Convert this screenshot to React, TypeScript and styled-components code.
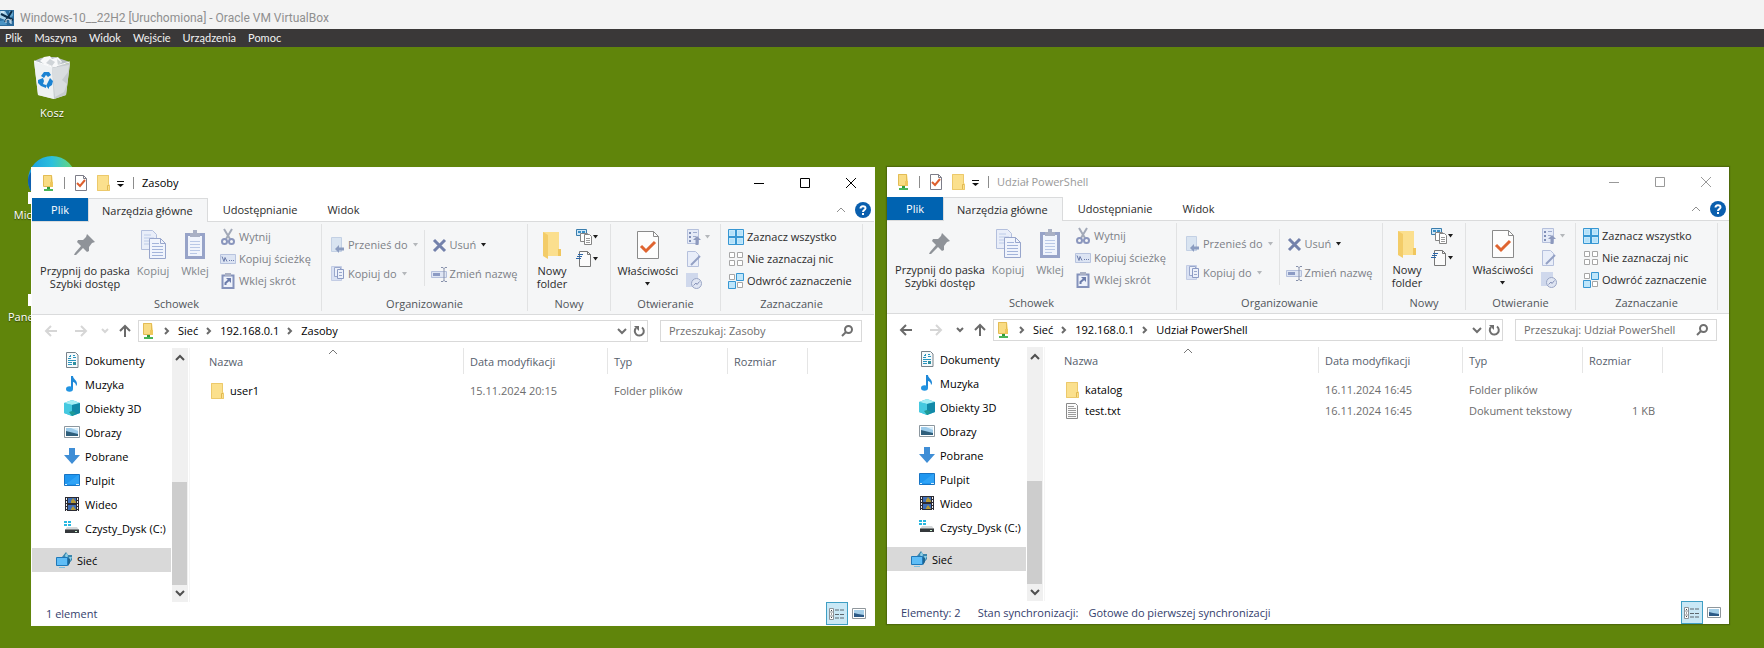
import React from "react";
import styled, { createGlobalStyle, css } from "styled-components";

const GlobalStyle = createGlobalStyle`
  *, *::before, *::after { box-sizing: border-box; }
  html, body { margin: 0; background: #60850b; }
  body { font: 11px/13px "Open Sans", "Noto Sans", sans-serif; color: #1b1b1b; }
  button, input { font: inherit; color: inherit; }
  svg { display: block; flex: none; overflow: visible; }
  ul { list-style: none; margin: 0; padding: 0; }
`;

const plainButton = css`
  border: 0;
  padding: 0;
  background: none;
  cursor: default;
`;

/* ---------- Host window ---------- */

const Host = styled.div`
  min-height: 100vh;
  display: flex;
  flex-direction: column;
`;

const HostTitle = styled.header`
  height: 29px;
  padding-top: 7px;
  display: flex;
  align-items: center;
  gap: 6px;
  background: #f3f3f3;
  h1 {
    margin: 0;
    font: 400 12px/16px Roboto, sans-serif;
    color: #8f8f8f;
  }
`;

const HostMenu = styled.nav`
  height: 18px;
  padding-left: 5px;
  display: flex;
  align-items: center;
  gap: 12px;
  background: #3a3838;
`;

const HostMenuButton = styled.button`
  ${plainButton}
  font: 11px/16px Lato, sans-serif;
  color: #f2f2f2;
`;

const Desktop = styled.main`
  position: relative;
  flex: 1;
  display: flex;
  align-items: flex-start;
  gap: 12px;
  padding: 120px 35px 22px 31px;
  overflow: hidden;
`;

const Shortcuts = styled.ul`
  position: absolute;
  top: 7px;
  left: 2px;
  width: 100px;
  display: flex;
  flex-direction: column;
  gap: 36px;
`;

const Shortcut = styled.li`
  display: flex;
  flex-direction: column;
  align-items: center;
  gap: 3px;
  line-height: 15px;
  color: #fff;
  white-space: nowrap;
  text-shadow: 0 1px 1px rgba(0, 0, 0, 0.5);
`;

/* ---------- Explorer window ---------- */

const Win = styled.section<{ $active: boolean }>`
  position: relative;
  flex: 1 1 0;
  min-width: 0;
  overflow: hidden;
  background: #fff;
  ${(p) => p.$active && "border: 1px solid #fdfdfd;"}
  ${(p) => !p.$active && "box-shadow: 0 0 1px 1px rgba(60, 80, 10, 0.5);"}
`;

const TitleBar = styled.header<{ $active: boolean }>`
  height: 30px;
  padding-left: 8px;
  display: flex;
  align-items: center;
  color: ${(p) => (p.$active ? "#000" : "#999")};
  h2 {
    flex: 1;
    margin: 0;
    padding-bottom: 2px;
    font: inherit;
  }
`;

const QuickBar = styled.div`
  display: flex;
  align-items: center;
  gap: 6px;
`;

const QuickButton = styled.button`
  ${plainButton}
`;

const Separator = styled.i`
  width: 1px;
  height: 12px;
  margin: 0 8px;
  background: #8c8c8c;
`;

const CaptionButton = styled.button`
  ${plainButton}
  width: 46px;
  height: 28px;
  display: grid;
  place-items: center;
`;

const Tabs = styled.nav`
  height: 23px;
  display: flex;
  align-items: stretch;
`;

const Tab = styled.button<{ $kind?: "file" | "selected" }>`
  ${plainButton}
  padding: 0 15px 1px;
  color: #2b2b2b;
  ${(p) =>
    p.$kind === "file" &&
    css`
      width: 56px;
      padding: 0 0 1px;
      background: #0063b1;
      color: #fff;
    `}
  ${(p) =>
    p.$kind === "selected" &&
    css`
      position: relative;
      height: 24px;
      padding: 0 14px 1px 13px;
      border: 1px solid #dadbdc;
      border-bottom: 0;
      background: #f5f6f7;
      z-index: 1;
    `}
`;

const TabTools = styled.div`
  margin-left: auto;
  padding-right: 3px;
  display: flex;
  align-items: center;
  gap: 10px;
`;

const Ribbon = styled.div`
  display: flex;
  padding: 2px 0 3px;
  border: solid #dadbdc;
  border-width: 1px 0;
  background: #f5f6f7;
`;

const Group = styled.section<{ $width: number }>`
  flex: none;
  width: ${(p) => p.$width}px;
  height: 87px;
  display: flex;
  flex-direction: column;
  border-right: 1px solid #e1e2e3;
  h3 {
    margin: 0;
    padding-bottom: 1px;
    font: inherit;
    text-align: center;
    color: #50555a;
  }
`;

const GroupBody = styled.div<{ $indent: number }>`
  flex: 1;
  display: flex;
  align-items: flex-start;
  gap: 4px;
  padding-left: ${(p) => p.$indent}px;
`;

const BigButton = styled.button<{ $width: number }>`
  ${plainButton}
  width: ${(p) => p.$width}px;
  padding-top: 6px;
  display: flex;
  flex-direction: column;
  align-items: center;
  gap: 5px;
  white-space: nowrap;
  color: #2b2b2b;
  &:disabled {
    color: #82868c;
  }
`;

const BigIcon = styled.span`
  height: 29px;
  display: grid;
  place-items: center;
`;

const BigLabel = styled.span`
  display: flex;
  flex-direction: column;
  align-items: center;
  gap: 5px;
`;

const SmallColumn = styled.div<{ $spread?: boolean }>`
  display: flex;
  flex-direction: column;
  padding-top: ${(p) => (p.$spread ? 10 : 2)}px;
  gap: ${(p) => (p.$spread ? 7 : 0)}px;
`;

const SmallButton = styled.button<{ $tight?: boolean }>`
  ${plainButton}
  height: 22px;
  padding-left: 2px;
  display: flex;
  align-items: center;
  gap: ${(p) => (p.$tight ? 1 : 3)}px;
  white-space: nowrap;
  color: #2b2b2b;
  &:disabled {
    color: #7d8187;
  }
`;

const SmallLabel = styled.span`
  padding-bottom: 2px;
`;

const Divider = styled.i`
  width: 1px;
  height: 56px;
  margin: 6px 0 0 1px;
  background: #e1e2e3;
`;

const AddressRow = styled.div`
  display: flex;
  align-items: center;
  padding: 5px 12px 6px 4px;
`;

const NavButton = styled.button<{ $width: number }>`
  ${plainButton}
  width: ${(p) => p.$width}px;
  height: 22px;
  display: grid;
  place-items: center;
  color: #6a6a6a;
  &:disabled {
    color: #d6d6d6;
  }
`;

const AddressBox = styled.div`
  flex: 1;
  height: 22px;
  margin: 0 12px 0 2px;
  padding-left: 1px;
  display: flex;
  align-items: center;
  border: 1px solid #d9d9d9;
  color: #000;
`;

const Crumb = styled.button`
  ${plainButton}
  padding-bottom: 1px;
  white-space: nowrap;
`;

const CrumbArrow = styled.span`
  width: 22px;
  display: grid;
  place-items: center;
`;

const AddressTools = styled.div`
  margin-left: auto;
  display: flex;
`;

const AddressTool = styled.button<{ $ruled?: boolean }>`
  ${plainButton}
  width: 17px;
  height: 20px;
  display: grid;
  place-items: center;
  ${(p) => p.$ruled && "border-left: 1px solid #d9d9d9;"}
`;

const SearchBox = styled.label`
  width: 202px;
  height: 22px;
  padding: 0 8px;
  display: flex;
  align-items: center;
  border: 1px solid #d9d9d9;
  input {
    flex: 1;
    min-width: 0;
    padding: 0 0 1px;
    border: 0;
    outline: 0;
    background: none;
  }
  input::placeholder {
    color: #6d6d6d;
    opacity: 1;
  }
`;

const Body = styled.div`
  display: flex;
  align-items: stretch;
`;

const Tree = styled.ul`
  && {
    width: 140px;
    flex: none;
    padding: 0 1px 30px 0;
  }
`;

const TreeLink = styled.a<{ $root?: boolean }>`
  height: 24px;
  margin-top: ${(p) => (p.$root ? 8 : 0)}px;
  padding-left: ${(p) => (p.$root ? 24 : 32)}px;
  display: flex;
  align-items: center;
  gap: 5px;
  overflow: hidden;
  white-space: nowrap;
  text-decoration: none;
  color: #000;
  background: ${(p) => (p.$root ? "#d9d9d9" : "none")};
`;

const ScrollBar = styled.div`
  width: 16px;
  flex: none;
  padding: 7px 0 6px;
  display: flex;
  flex-direction: column;
  align-items: center;
  justify-content: space-between;
  background: #f0f0f0;
`;

const ScrollThumb = styled.i`
  width: 16px;
  height: 103px;
  margin: auto 0 5px;
  border-right: 1px solid #f0f0f0;
  background: #cdcdcd;
`;

const FilePane = styled.div`
  flex: 1;
  min-width: 0;
  margin-left: 1px;
  padding-left: 13px;
  border-left: 1px solid #f5f5f5;
`;

const FileTable = styled.table`
  width: 100%;
  table-layout: fixed;
  border-collapse: collapse;
  th, td {
    padding: 0;
    font-weight: 400;
    text-align: left;
    white-space: nowrap;
    color: #6d6d6d;
  }
  td { height: 21px; padding: 0 8px 0 6px; }
  col:nth-child(1) { width: 261px; }
  col:nth-child(2) { width: 144px; }
  col:nth-child(3) { width: 120px; }
  col:nth-child(4) { width: 80px; }
`;

const HeadCell = styled.div`
  position: relative;
  height: 26px;
  margin-bottom: 6px;
  padding-left: 6px;
  display: flex;
  align-items: center;
  border-right: 1px solid #e5e5e5;
  color: #56606c;
`;

const SortMark = styled.span`
  position: absolute;
  top: 1px;
  left: 50%;
  margin-left: -4px;
`;

const FileName = styled.span`
  display: flex;
  align-items: center;
  gap: 5px;
  color: #000;
`;

const SizeCell = styled.td`
  && { text-align: right; }
`;

const StatusBar = styled.footer`
  height: 23px;
  padding: 0 4px 0 14px;
  display: flex;
  align-items: center;
  gap: 17px;
  color: #34406c;
`;

const StatusPair = styled.span`
  display: flex;
  gap: 10px;
`;

const ViewButtons = styled.div`
  margin-left: auto;
  display: flex;
`;

const ViewButton = styled.button<{ $on?: boolean }>`
  ${plainButton}
  width: 22px;
  height: 23px;
  display: grid;
  place-items: center;
  ${(p) => p.$on && "border: 1px solid #3f9fc4; background: #c9e8f6;"}
`;

/* ---------- Icons ---------- */

type BoxProps = { w?: number; h?: number; children: React.ReactNode };
const Svg = ({ w = 16, h = 16, children }: BoxProps) => (
  <svg width={w} height={h} viewBox={`0 0 ${w} ${h}`} fill="none" aria-hidden="true">
    {children}
  </svg>
);

const HostIcon = () => (
  <Svg w={14}>
    <path d="M0 0H14V16H0Z" fill="#2b6b9c" />
    <path d="M0 1H5L8 6 5 10 0 8Z" fill="#a9d3ea" />
    <path d="M9 1H13V6L10 8Z" fill="#5fa3cd" />
    <path d="M0 11 5 10 7 15H0Z" fill="#4b94c4" />
    <path d="M12 1 5 12M1 4 13 10" stroke="#0c2c48" strokeWidth="2" />
    <path d="M6 13V10L8 9 10 10V13M11 9V14" stroke="#e6f3fb" />
    <path d="M1 2H4" stroke="#f4fafd" />
  </Svg>
);

const BinIcon = () => (
  <Svg w={48} h={48}>
    <path d="M6 7 10 41 26 45 38 41 42 9 24 13Z" fill="#dfe3e6" />
    <path d="M6 7 24 12 26 45 10 41Z" fill="#eef1f3" />
    <path d="M24 12 42 9 38 41 26 45Z" fill="#c6cbcf" />
    <path d="M24 14 41 11 40 18 34 26 39 30 36 38 27 43Z" fill="#d9dde0" />
    <path d="M6 7 13 4 19 3 27 3 42 8 24 13Z" fill="#b9c0c5" />
    <path d="M12 7 16 3 22 2 24 5 30 3 34 8 28 13 17 11Z" fill="#f8f9fa" />
    <path d="M18 9 22 5 27 8 24 12ZM29 5 33 8 30 12Z" fill="#cfd4d8" />
    <path d="M6 7 24 13 42 8" stroke="#fafbfc" />
    <g fill="#1b82d2">
      <path d="M13 22 16 18 21 18 23 21 20 23 18 21 16 24Z" />
      <path d="M10 26 15 24 16 27 15 30 18 31 18 34 13 32 10 29Z" />
      <path d="M19 30 22 24 25 27 24 31 21 33 21 35 18 32Z" />
    </g>
  </Svg>
);

const EdgeIcon = () => (
  <Svg w={48} h={48}>
    <defs>
      <linearGradient id="edge" x1="0" y1="0" x2="1" y2="0">
        <stop offset="0" stopColor="#1b9de0" />
        <stop offset="0.5" stopColor="#2cc0dc" />
        <stop offset="1" stopColor="#6fdc6c" />
      </linearGradient>
    </defs>
    <circle cx="24" cy="24" r="24" fill="url(#edge)" />
    <path d="M0 24C1 15 8 10 14 12 4 18 5 34 12 44 5 40 0 33 0 24Z" fill="#0f5fae" />
    <path d="M0 36H12V48H0Z" fill="#fff" />
  </Svg>
);

const PanelIcon = () => (
  <Svg w={48} h={48}>
    <path d="M4 8H44V40H4Z" fill="#3a9bdc" />
    <path d="M0 36H12V48H0Z" fill="#fff" />
  </Svg>
);

const NetFolderIcon = () => (
  <Svg>
    <path d="M3 0H12L13 7V11H3Z" fill="#f9dc84" />
    <path d="M3.500.500H11.500V7L12.500 8V11.500H3.500Z" stroke="#e3bc55" />
    <path d="M10 7H13V12H10Z" fill="#efc75c" />
    <path d="M7 12H10V15H7Z" fill="#2f9c3c" />
    <path d="M4 14H13V16H4Z" fill="#4bb457" />
  </Svg>
);

const FolderIcon = () => (
  <Svg>
    <path d="M2 0H14V9L15 10V16H2Z" fill="#fbe08d" />
    <path d="M2.500.500H13.500V9.500L14.500 10.500V15.500H2.500Z" stroke="#ecc96b" />
    <path d="M12.500 15V10.500H14" stroke="#e0b850" />
  </Svg>
);

const CheckDocIcon = () => (
  <Svg>
    <path d="M2.500.500H10.500L13.500 3.500V15.500H2.500Z" fill="#fff" stroke="#7d7d88" />
    <path d="M10.500.500V3.500H13.500" stroke="#7d7d88" />
    <path d="M4 8 7 11 12 5" stroke="#dd5f2d" strokeWidth="2" />
  </Svg>
);

const QuickMenuIcon = () => (
  <Svg w={8} h={16}>
    <path d="M0 6.500H7" stroke="#111" />
    <path d="M0 9H7L3.500 12Z" fill="#111" />
  </Svg>
);

const Arrow = ({ off }: { off?: boolean }) => (
  <Svg w={6} h={4}>
    <path d="M0 0H5L2.500 3.500Z" fill={off ? "#b4b7bb" : "#1d1d1d"} />
  </Svg>
);
const SpacedArrow = styled.span`
  margin-left: 2px;
`;

const PinIcon = () => (
  <Svg w={22} h={22}>
    <path
      d="M13 0 21 8 18 9 15 13 15 17 13 18 9 14 2 21 0 21 1 19 7 12 3 8 4 6 9 6 12 3Z"
      fill="#8f9399"
    />
  </Svg>
);

const CopyIcon = () => (
  <Svg w={25} h={29}>
    <path d="M.500.500H11.500L15.500 4.500V19.500H.500Z" fill="#e9eef9" stroke="#b3bfdd" />
    <path d="M3 5H10M3 8H13M3 11H13M3 14H13" stroke="#bccbe8" />
    <path d="M8.500 8.500H19.500L24.500 13.500V28.500H8.500Z" fill="#f0f4fc" stroke="#98a6cc" />
    <path d="M19.500 8.500V13.500H24.500" stroke="#98a6cc" />
    <path d="M11 13.500H18M11 16.500H22M11 19.500H22M11 22.500H22M11 25.500H22" stroke="#a3b4da" />
  </Svg>
);

const PasteIcon = () => (
  <Svg w={20} h={29}>
    <path d="M0 3H20V29H0Z" fill="#97a3c8" />
    <path d="M3 6H17V26H3Z" fill="#f0f4fc" />
    <path d="M5 11.500H15M5 14.500H15M5 17.500H15M5 20.500H15M5 23.500H12" stroke="#b9c8e6" />
    <path d="M5 3H8V0H12V3H15V7H5Z" fill="#a9b0c4" />
  </Svg>
);

const CutIcon = () => (
  <Svg>
    <path d="M4 0 10 10M12 0 6 10" stroke="#a2a9b8" strokeWidth="2" />
    <circle cx="4.500" cy="12.500" r="2.500" stroke="#8a96bd" strokeWidth="2" />
    <circle cx="11.500" cy="12.500" r="2.500" stroke="#8a96bd" strokeWidth="2" />
  </Svg>
);

const CopyPathIcon = () => (
  <Svg>
    <path d="M.500 3.500H15.500V12.500H.500Z" fill="#dce4f3" stroke="#b7c3de" />
    <path d="M2 5.500 4 10.500 5 6.500 7 10.500" stroke="#6b7cab" />
    <path d="M9 9.500H10M11 9.500H12M13 9.500H14" stroke="#6b7cab" />
  </Svg>
);

const PasteLinkIcon = () => (
  <Svg>
    <path d="M2.500 2.500H13.500V15H2.500Z" fill="#eef2fb" stroke="#8492bb" strokeWidth="2" />
    <path d="M5 0H11V3H5Z" fill="#a9b0c4" />
    <path d="M5.500 12V10L9 7" stroke="#6b7cab" strokeWidth="2" />
    <path d="M6 5H11V10Z" fill="#6b7cab" />
  </Svg>
);

const MoveIcon = () => (
  <Svg>
    <path d="M2.500.500H12.500V14.500H2.500Z" fill="#d9e4f1" stroke="#c3d0e4" />
    <path d="M6 12 10 8V10.500H15V13.500H10V16Z" fill="#8b9cc0" />
  </Svg>
);

const CopyToIcon = () => (
  <Svg>
    <path d="M2.500.500H12.500V14.500H2.500Z" fill="#d9e1f3" stroke="#c3cce4" />
    <path d="M5.500 1.500H11.500V10.500H5.500Z" fill="#edf1fa" stroke="#9aa8cc" />
    <path d="M8.500 3.500H14.500V12.500H8.500Z" fill="#edf1fa" stroke="#8c9bc4" />
    <path d="M10 6.500H13M10 9.500H13" stroke="#9aa8cc" />
  </Svg>
);

const DeleteIcon = () => (
  <Svg>
    <path d="M3 3 14 14M14 3 3 14" stroke="#7381ab" strokeWidth="3" />
  </Svg>
);

const RenameIcon = () => (
  <Svg>
    <path d="M.500 5.500H15.500V11.500H.500Z" fill="#dfe6f4" stroke="#b5c0dc" />
    <path d="M2 7H9V10H2Z" fill="#8c9bc4" />
    <path d="M10 1.500H12L13 2.500 14 1.500H16M10 15.500H12L13 14.500 14 15.500H16M13 2V15" stroke="#8791ab" />
  </Svg>
);

const NewFolderIcon = () => (
  <Svg w={20} h={28}>
    <path d="M1 1H17V18L19 19V25H1Z" fill="#fbdf8e" />
    <path d="M1 1 6 4V28L1 25Z" fill="#f3cc68" />
    <path d="M16 18H19V25H16Z" fill="#f0c65d" />
  </Svg>
);

const NewItemIcon = () => (
  <Svg>
    <path d="M.500.500H10.500V6.500H.500Z" fill="#cfe7f7" stroke="#3a7dad" />
    <path d="M2 2H5V4H2ZM6 2H9V4H6Z" fill="#3a8fc6" />
    <path d="M4.500 4.500H11.500V12.500H4.500Z" fill="#fff" stroke="#858585" />
    <path d="M8.500 5.500H13.500L15.500 7.500V15.500H8.500Z" fill="#fff" stroke="#858585" />
    <path d="M10 9.500H14M10 11.500H14M10 13.500H14" stroke="#9a9a9a" />
  </Svg>
);

const EasyAccessIcon = () => (
  <Svg>
    <path d="M3.500.500H11.500L14.500 3.500V15.500H3.500Z" fill="#fbfbfb" stroke="#777" />
    <path d="M11.500.500V3.500H14.500" stroke="#777" />
    <path d="M2 3.500H7M1 5.500H6M0 7.500H5" stroke="#2c66a8" />
  </Svg>
);

const PropertiesIcon = () => (
  <Svg w={22} h={28}>
    <path d="M.500.500H16.500L21.500 5.500V27.500H.500Z" fill="#fdfdfd" stroke="#8a8a8a" />
    <path d="M16.500.500V5.500H21.500" stroke="#8a8a8a" />
    <path d="M4 15 9 20 18 11" stroke="#df6430" strokeWidth="3" />
  </Svg>
);

const OpenIcon = () => (
  <Svg>
    <path d="M1.500.500H12.500V14.500H1.500Z" fill="#e4eaf7" stroke="#b5c0dc" />
    <path d="M3 3H5V5H3ZM3 7H5V9H3ZM3 11H5V13H3Z" fill="#7e8db5" />
    <path d="M7 3.500H11M7 7.500H10" stroke="#9eabcd" />
    <path d="M7 11 11 7 15 11H12.500V16H9.500V11Z" fill="#8d99bd" />
  </Svg>
);

const EditIcon = () => (
  <Svg>
    <path d="M1.500.500H9.500L12.500 3.500V15.500H1.500Z" fill="#e9eef9" stroke="#b5c0dc" />
    <path d="M5 14 14 5" stroke="#93a0c4" strokeWidth="2" />
  </Svg>
);

const HistoryIcon = () => (
  <Svg>
    <path d="M0 0H12V14H0Z" fill="#cfd8ec" />
    <circle cx="10.500" cy="10.500" r="5" fill="#dfe5f2" stroke="#9aa6c6" />
    <path d="M7.500 12.500 10 10 11 11.500 13.500 8.500" stroke="#8793b8" />
  </Svg>
);

const SelectAllIcon = () => (
  <Svg>
    <path d="M.500.500H15.500V15.500H.500Z" fill="#c5e8fb" stroke="#3797d3" />
    <path d="M8 0V16M0 8H16" stroke="#3797d3" strokeWidth="2" />
    <path d="M2 2H6V6H2ZM10 2H14V6H10ZM2 10H6V14H2ZM10 10H14V14H10Z" fill="#b4e1f9" />
  </Svg>
);

const SelectNoneIcon = () => (
  <Svg>
    <path
      d="M1.500 1.500H6.500V6.500H1.500ZM9.500 1.500H14.500V6.500H9.500ZM1.500 9.500H6.500V14.500H1.500ZM9.500 9.500H14.500V14.500H9.500Z"
      fill="#fff"
      stroke="#a6a6a6"
    />
  </Svg>
);

const InvertIcon = () => (
  <Svg>
    <path d="M1.500 1.500H6.500V6.500H1.500ZM9.500 9.500H14.500V14.500H9.500Z" fill="#fff" stroke="#a6a6a6" />
    <path d="M8.500.500H15.500V7.500H8.500ZM.500 8.500H7.500V15.500H.500Z" fill="#bfe6fb" stroke="#3797d3" />
  </Svg>
);

const HelpIcon = () => (
  <Svg>
    <circle cx="8" cy="8" r="8" fill="#0a5fae" />
    <path d="M5.500 6.500C5.500 3.500 10.500 3.500 10.500 6.200 10.500 8 8 8 8 10" stroke="#fff" strokeWidth="2" />
    <path d="M7 11H9V13H7Z" fill="#fff" />
  </Svg>
);

type ChevronProps = { d: string; w?: number; h?: number; tone?: string; weight?: number };
const Chevron = ({ d, w = 8, h = 5, tone = "#8a8a8a", weight = 1 }: ChevronProps) => (
  <Svg w={w} h={h}>
    <path d={d} stroke={tone} strokeWidth={weight} />
  </Svg>
);

const BackIcon = () => (
  <Svg w={14} h={12}>
    <path d="M7 1 2 6 7 11M2 6H13" stroke="currentColor" strokeWidth="2" />
  </Svg>
);
const ForwardIcon = () => (
  <Svg w={14} h={12}>
    <path d="M7 1 12 6 7 11M12 6H1" stroke="currentColor" strokeWidth="2" />
  </Svg>
);
const UpIcon = () => (
  <Svg w={12} h={14}>
    <path d="M1 7 6 2 11 7M6 2V13" stroke="currentColor" strokeWidth="2" />
  </Svg>
);
const RefreshIcon = () => (
  <Svg w={12} h={12}>
    <path d="M9 2.500A4.500 4.500 0 1 1 3 3" stroke="#6f6f6f" strokeWidth="2" />
    <path d="M1 1H6V6Z" fill="#6f6f6f" />
  </Svg>
);
const SearchIcon = () => (
  <Svg w={12} h={12}>
    <circle cx="7.500" cy="4.500" r="3.500" stroke="#6f6f6f" strokeWidth="2" />
    <path d="M5 7 1 11" stroke="#6f6f6f" strokeWidth="2" />
  </Svg>
);

const DocsIcon = () => (
  <Svg>
    <path d="M2.500.500H11.500L14 3V15.500H2.500Z" fill="#f6fafc" stroke="#77828a" />
    <path d="M4 6.500H7M5 4.500H7M6 3.500H7M9 3.500H11M9 5.500H12M4 8.500H12M4 10.500H8M4 12.500H8" stroke="#2a95bf" />
    <path d="M9 10H12V13H9Z" fill="#2f8f9f" />
  </Svg>
);
const MusicIcon = () => (
  <Svg>
    <path d="M7 0H9C9 3 13 4 13 8 13 9 12 10 12 10 12 7 10 6 9 6V13H7Z" fill="#1e88d8" />
    <ellipse cx="5.500" cy="13" rx="3.500" ry="2.800" fill="#2294e2" />
  </Svg>
);
const CubeIcon = () => (
  <Svg>
    <path d="M0 3 8 0 16 3 16 13 8 16 0 13Z" fill="#38bcd8" />
    <path d="M0 3 8 0 16 3 8 5Z" fill="#a4eef5" />
    <path d="M0 3 8 5V16L0 13Z" fill="#45c9e0" />
    <path d="M8 5 16 3V13L8 16Z" fill="#1289a8" />
    <path d="M5 12 8 11 12 13 8 16Z" fill="#1f9a96" />
  </Svg>
);
const PictureIcon = () => (
  <Svg>
    <path d="M.500 2.500H15.500V13.500H.500Z" fill="#fff" stroke="#8c979f" />
    <path d="M2 4H14V12H2Z" fill="#9ccbea" />
    <path d="M2 7 6 8 14 10V12H2Z" fill="#2f5f7c" />
    <path d="M7 4H14V7Z" fill="#d9eefa" />
  </Svg>
);
const DownloadIcon = () => (
  <Svg>
    <path d="M5 0H11V7H16L8 16 0 7H5Z" fill="#3f8ed6" />
  </Svg>
);
const DesktopIcon = () => (
  <Svg>
    <path d="M.500 2.500H15.500V13.500H.500Z" fill="#1f97f0" stroke="#1774c4" />
    <path d="M1 13 14 3H15V12H1Z" fill="#2fa3f6" />
    <path d="M1 12.500H3M12 12.500H15" stroke="#d8eefc" />
  </Svg>
);
const VideoIcon = () => (
  <Svg>
    <path d="M1 1H15V15H1Z" fill="#2b2b33" />
    <path d="M4 2H12V7H4ZM4 9H12V14H4Z" fill="#3f6fb8" />
    <path d="M7 5 9 2 12 6V7H7ZM7 13 9 10 12 14H7Z" fill="#b49a35" />
    <path d="M2.500 2V15M13.500 2V15" stroke="#f1f1f1" strokeDasharray="2 1" />
  </Svg>
);
const DriveIcon = () => (
  <Svg>
    <path d="M0 1H3V3H0ZM4 1H7V3H4ZM0 4H3V6H0ZM4 4H7V6H4Z" fill="#28b7e0" />
    <path d="M3 7H13L15 10H1Z" fill="#d5d8da" />
    <path d="M1 9.500H15V13H1Z" fill="#34383b" />
    <path d="M11 11H13V12H11Z" fill="#c9f2d0" />
  </Svg>
);
const NetworkIcon = () => (
  <Svg>
    <path d="M6 5 10 0 12 3 16 3 16 8 11 14Z" fill="#3b86ad" />
    <path d="M9 3 11 1 12 4 10 7ZM13 5 16 5 14 9Z" fill="#8fd0e6" />
    <path d="M.500 5.500H11.500V13.500H.500Z" fill="#5fbdf6" stroke="#1f78b8" />
    <path d="M12 6 14 7V11L12 14Z" fill="#20648f" />
    <path d="M3 15.500H9" stroke="#7dbfe0" />
  </Svg>
);
const TextFileIcon = () => (
  <Svg>
    <path d="M2.500.500H11.500L13.500 2.500V15.500H2.500Z" fill="#fbfbfb" stroke="#8a8a8a" />
    <path d="M4 3.500H10M4 5.500H12M4 7.500H12M4 9.500H12M4 11.500H12M4 13.500H12" stroke="#9b9b9b" />
  </Svg>
);
const DetailsIcon = () => (
  <Svg>
    <path d="M.500 2.500H4.500V13.500H.500ZM.500 6H4.500M.500 10H4.500" fill="#fff" stroke="#8d9398" />
    <path d="M2 4.500H3M2 8H3M2 11.500H3" stroke="#444" />
    <path d="M6 4H16M6 8.500H16M6 12H16" stroke="#5d676e" strokeDasharray="4 1" />
  </Svg>
);
const LargeIcon = () => (
  <Svg w={14} h={11}>
    <path d="M.500.500H13.500V10.500H.500Z" fill="#fff" stroke="#8f979c" />
    <path d="M2 2H12V9H2Z" fill="#a5cfe9" />
    <path d="M2 5 6 6 12 7V9H2Z" fill="#2d5a86" />
  </Svg>
);
const MinimizeIcon = () => (
  <Svg w={10} h={10}><path d="M0 5.500H10" stroke="currentColor" /></Svg>
);
const MaximizeIcon = () => (
  <Svg w={10} h={10}><path d="M.500.500H9.500V9.500H.500Z" stroke="currentColor" /></Svg>
);
const CloseIcon = () => (
  <Svg w={10} h={10}><path d="M0 0 10 10M10 0 0 10" stroke="currentColor" /></Svg>
);

/* ---------- Data ---------- */

type FileRow = { name: string; date: string; type: string; size?: string; folder?: boolean };
type ExplorerProps = {
  title: string;
  active: boolean;
  canGoBack: boolean;
  files: FileRow[];
  count: string;
  sync?: [string, string];
};

const places: [string, React.ReactNode][] = [
  ["Dokumenty", <DocsIcon />],
  ["Muzyka", <MusicIcon />],
  ["Obiekty 3D", <CubeIcon />],
  ["Obrazy", <PictureIcon />],
  ["Pobrane", <DownloadIcon />],
  ["Pulpit", <DesktopIcon />],
  ["Wideo", <VideoIcon />],
  ["Czysty_Dysk (C:)", <DriveIcon />],
];

const CrumbMark = () => (
  <CrumbArrow>
    <Chevron w={4} h={8} d="M0 1 3 4 0 7" tone="#6a6a6a" weight={2} />
  </CrumbArrow>
);

type CommandProps = { icon: React.ReactNode; label: string; disabled?: boolean; menu?: "on" | "off" };
const Command = ({ icon, label, disabled, menu }: CommandProps) => (
  <SmallButton disabled={disabled}>
    {icon}
    <SmallLabel>{label}</SmallLabel>
    {menu && <SpacedArrow><Arrow off={menu === "off"} /></SpacedArrow>}
  </SmallButton>
);

const ExplorerRibbon = () => (
  <Ribbon>
    <Group $width={290}>
      <GroupBody $indent={8}>
        <BigButton $width={90}>
          <BigIcon><PinIcon /></BigIcon>
          <span>Przypnij do paska<br />Szybki dostęp</span>
        </BigButton>
        <BigButton $width={38} disabled>
          <BigIcon><CopyIcon /></BigIcon>
          Kopiuj
        </BigButton>
        <BigButton $width={38} disabled>
          <BigIcon><PasteIcon /></BigIcon>
          Wklej
        </BigButton>
        <SmallColumn>
          <Command disabled icon={<CutIcon />} label="Wytnij" />
          <Command disabled icon={<CopyPathIcon />} label="Kopiuj ścieżkę" />
          <Command disabled icon={<PasteLinkIcon />} label="Wklej skrót" />
        </SmallColumn>
      </GroupBody>
      <h3>Schowek</h3>
    </Group>
    <Group $width={206}>
      <GroupBody $indent={5}>
        <SmallColumn $spread>
          <Command disabled icon={<MoveIcon />} label="Przenieś do" menu="off" />
          <Command disabled icon={<CopyToIcon />} label="Kopiuj do" menu="off" />
        </SmallColumn>
        <Divider />
        <SmallColumn $spread>
          <Command disabled icon={<DeleteIcon />} label="Usuń" menu="on" />
          <Command disabled icon={<RenameIcon />} label="Zmień nazwę" />
        </SmallColumn>
      </GroupBody>
      <h3>Organizowanie</h3>
    </Group>
    <Group $width={83}>
      <GroupBody $indent={6}>
        <BigButton $width={36}>
          <BigIcon><NewFolderIcon /></BigIcon>
          <span>Nowy<br />folder</span>
        </BigButton>
        <SmallColumn>
          <SmallButton $tight aria-label="Nowy element"><NewItemIcon /><Arrow /></SmallButton>
          <SmallButton $tight aria-label="Łatwy dostęp"><EasyAccessIcon /><Arrow /></SmallButton>
        </SmallColumn>
      </GroupBody>
      <h3>Nowy</h3>
    </Group>
    <Group $width={110}>
      <GroupBody $indent={5}>
        <BigButton $width={64}>
          <BigIcon><PropertiesIcon /></BigIcon>
          <BigLabel>Właściwości<Arrow /></BigLabel>
        </BigButton>
        <SmallColumn>
          <SmallButton disabled aria-label="Otwórz"><OpenIcon /><Arrow off /></SmallButton>
          <SmallButton disabled aria-label="Edytuj"><EditIcon /></SmallButton>
          <SmallButton disabled aria-label="Historia"><HistoryIcon /></SmallButton>
        </SmallColumn>
      </GroupBody>
      <h3>Otwieranie</h3>
    </Group>
    <Group $width={142}>
      <GroupBody $indent={5}>
        <SmallColumn>
          <Command icon={<SelectAllIcon />} label="Zaznacz wszystko" />
          <Command icon={<SelectNoneIcon />} label="Nie zaznaczaj nic" />
          <Command icon={<InvertIcon />} label="Odwróć zaznaczenie" />
        </SmallColumn>
      </GroupBody>
      <h3>Zaznaczanie</h3>
    </Group>
  </Ribbon>
);

const Explorer = ({ title, active, canGoBack, files, count, sync }: ExplorerProps) => (
  <Win $active={active} aria-label={title}>
    <TitleBar $active={active}>
      <NetFolderIcon />
      <Separator />
      <QuickBar>
        <QuickButton aria-label="Właściwości"><CheckDocIcon /></QuickButton>
        <QuickButton aria-label="Nowy folder"><FolderIcon /></QuickButton>
        <QuickButton aria-label="Dostosuj"><QuickMenuIcon /></QuickButton>
      </QuickBar>
      <Separator />
      <h2>{title}</h2>
      <CaptionButton aria-label="Minimalizuj"><MinimizeIcon /></CaptionButton>
      <CaptionButton aria-label="Maksymalizuj"><MaximizeIcon /></CaptionButton>
      <CaptionButton aria-label="Zamknij"><CloseIcon /></CaptionButton>
    </TitleBar>
    <Tabs>
      <Tab $kind="file">Plik</Tab>
      <Tab $kind="selected">Narzędzia główne</Tab>
      <Tab>Udostępnianie</Tab>
      <Tab>Widok</Tab>
      <TabTools>
        <QuickButton aria-label="Zwiń wstążkę">
          <Chevron d="M0 5 4 1 8 5" tone="#8f8f8f" />
        </QuickButton>
        <QuickButton aria-label="Pomoc"><HelpIcon /></QuickButton>
      </TabTools>
    </Tabs>
    <ExplorerRibbon />
    <AddressRow>
      <NavButton $width={30} disabled={!canGoBack} aria-label="Wstecz"><BackIcon /></NavButton>
      <NavButton $width={30} disabled aria-label="Dalej"><ForwardIcon /></NavButton>
      <NavButton $width={18} disabled={!canGoBack} aria-label="Ostatnie lokalizacje">
        <Chevron w={6} h={4} d="M0 0 3 3 6 0" tone="currentColor" weight={2} />
      </NavButton>
      <NavButton $width={22} aria-label="W górę"><UpIcon /></NavButton>
      <AddressBox>
        <NetFolderIcon />
        <CrumbMark />
        <Crumb>Sieć</Crumb>
        <CrumbMark />
        <Crumb>192.168.0.1</Crumb>
        <CrumbMark />
        <Crumb>{title}</Crumb>
        <AddressTools>
          <AddressTool aria-label="Poprzednie lokalizacje">
            <Chevron w={10} h={6} d="M1 1 5 5 9 1" tone="#6f6f6f" weight={2} />
          </AddressTool>
          <AddressTool $ruled aria-label="Odśwież"><RefreshIcon /></AddressTool>
        </AddressTools>
      </AddressBox>
      <SearchBox>
        <input type="text" aria-label="Przeszukaj" placeholder={`Przeszukaj: ${title}`} />
        <SearchIcon />
      </SearchBox>
    </AddressRow>
    <Body>
      <Tree>
        {places.map(([name, icon]) => (
          <li key={name}><TreeLink href="#">{icon}{name}</TreeLink></li>
        ))}
        <li><TreeLink $root href="#"><NetworkIcon />Sieć</TreeLink></li>
      </Tree>
      <ScrollBar>
        <Chevron w={8} h={6} d="M0 5 4 1 8 5" tone="#505050" weight={2} />
        <ScrollThumb />
        <Chevron w={8} h={6} d="M0 1 4 5 8 1" tone="#505050" weight={2} />
      </ScrollBar>
      <FilePane>
        <FileTable>
          <colgroup><col /><col /><col /><col /><col /></colgroup>
          <thead>
            <tr>
              <th>
                <HeadCell>
                  Nazwa
                  <SortMark><Chevron d="M0 5 4 1 8 5" tone="#777" /></SortMark>
                </HeadCell>
              </th>
              <th><HeadCell>Data modyfikacji</HeadCell></th>
              <th><HeadCell>Typ</HeadCell></th>
              <th><HeadCell>Rozmiar</HeadCell></th>
              <th />
            </tr>
          </thead>
          <tbody>
            {files.map((f) => (
              <tr key={f.name}>
                <td><FileName>{f.folder ? <FolderIcon /> : <TextFileIcon />}{f.name}</FileName></td>
                <td>{f.date}</td>
                <td>{f.type}</td>
                <SizeCell>{f.size}</SizeCell>
                <td />
              </tr>
            ))}
          </tbody>
        </FileTable>
      </FilePane>
    </Body>
    <StatusBar>
      <span>{count}</span>
      {sync && <StatusPair><span>{sync[0]}</span><span>{sync[1]}</span></StatusPair>}
      <ViewButtons>
        <ViewButton $on aria-label="Szczegóły"><DetailsIcon /></ViewButton>
        <ViewButton aria-label="Duże ikony"><LargeIcon /></ViewButton>
      </ViewButtons>
    </StatusBar>
  </Win>
);

const hostMenu = ["Plik", "Maszyna", "Widok", "Wejście", "Urządzenia", "Pomoc"];

export default function App() {
  return (
    <Host>
      <GlobalStyle />
      <HostTitle>
        <HostIcon />
        <h1>Windows-10__22H2 [Uruchomiona] - Oracle VM VirtualBox</h1>
      </HostTitle>
      <HostMenu>
        {hostMenu.map((m) => <HostMenuButton key={m}>{m}</HostMenuButton>)}
      </HostMenu>
      <Desktop>
        <Shortcuts>
          <Shortcut><BinIcon />Kosz</Shortcut>
          <Shortcut><EdgeIcon />Microsoft Edge</Shortcut>
          <Shortcut><PanelIcon />Panel sterowania</Shortcut>
        </Shortcuts>
        <Explorer
          title="Zasoby"
          active
          canGoBack={false}
          files={[{ name: "user1", date: "15.11.2024 20:15", type: "Folder plików", folder: true }]}
          count="1 element"
        />
        <Explorer
          title="Udział PowerShell"
          active={false}
          canGoBack
          files={[
            { name: "katalog", date: "16.11.2024 16:45", type: "Folder plików", folder: true },
            { name: "test.txt", date: "16.11.2024 16:45", type: "Dokument tekstowy", size: "1 KB" },
          ]}
          count="Elementy: 2"
          sync={["Stan synchronizacji:", "Gotowe do pierwszej synchronizacji"]}
        />
      </Desktop>
    </Host>
  );
}
